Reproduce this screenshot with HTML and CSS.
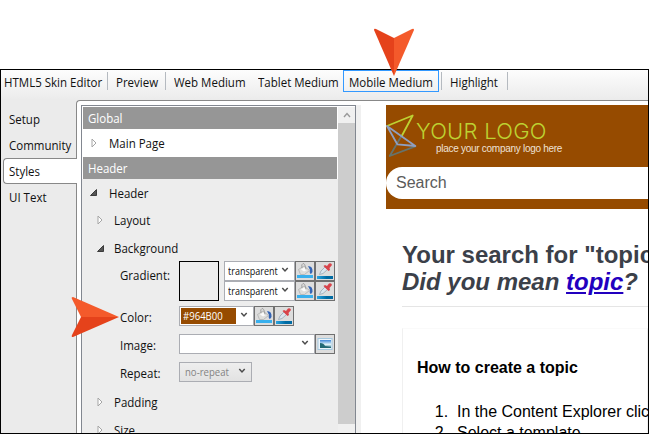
FILE: index.html
```html
<!DOCTYPE html>
<html lang="en">
<head>
<meta charset="utf-8">
<title>HTML5 Skin Editor</title>
<link rel="stylesheet" href="styles.css">
</head>
<body>
<svg class="defs" width="0" height="0">
  <defs>
    <linearGradient id="blue"><stop offset="0" stop-color="#2aa5e0"/><stop offset=".6" stop-color="#006ba3"/></linearGradient>
    <linearGradient id="sky" x2="0" y2="1"><stop offset="0" stop-color="#3d85d8"/><stop offset=".55" stop-color="#e4f6fa"/><stop offset="1" stop-color="#2c6e86"/></linearGradient>
    <symbol id="bucket" viewBox="0 0 18 18">
      <rect x="1" y="13" width="16" height="3" fill="#39b0ed"/>
      <path d="M12 4q5 0 4.500 6l-1.500 2q-2-1-1-4z" fill="#3565b5"/>
      <path d="M2.500 7.500 8 4l5.500 4.500-5 4-4 0z" fill="#dededb" stroke="#a9abaa" stroke-width=".7"/>
      <path d="M5 7.500 8 5.500l3 2.500-3 1.500z" fill="#fafafa"/>
      <path d="M6 6q-1-4 1-4.500t3 6" fill="none" stroke="#989a9a" stroke-width=".9"/>
    </symbol>
    <symbol id="dropper" viewBox="0 0 18 18">
      <rect x="1" y="14" width="16" height="3" fill="url(#blue)"/>
      <path d="M3.500 12.500 5 9l4-4 2.500 2.500-4.500 4z" fill="#dce5ee" stroke="#98a7b5" stroke-width=".8"/>
      <path d="m7.500 4 1.500-1 2 1 2-2.500q2.500-1 3 1.500L13.500 6l.5 2-1.500 1z" fill="#d9434a"/>
    </symbol>
    <symbol id="closed" viewBox="0 0 6 10"><path d="M1 1v8l4-4z" fill="#fff" stroke="#a5a5a5"/></symbol>
    <symbol id="open" viewBox="0 0 7 7"><path d="M6.500 .5v6H.500z" fill="#555" stroke="#222" stroke-width=".8"/></symbol>
    <symbol id="chev" viewBox="0 0 8 6"><path d="m1.300 1 2.700 3 2.700-3" fill="none" stroke="#4c4c4c" stroke-width="1.500"/></symbol>
  </defs>
</svg>
<main class="window">
  <nav class="toolbar">
    <div class="tool tool-title"><span class="t">HTML5 Skin Editor</span></div>
    <div class="tool tool-preview"><span class="t">Preview</span></div>
    <div class="tool tool-web"><span class="t">Web Medium</span></div>
    <div class="tool tool-tablet"><span class="t">Tablet Medium</span></div>
    <div class="tool tool-mobile"><span class="t">Mobile Medium</span></div>
    <div class="tool tool-highlight"><span class="t">Highlight</span></div>
  </nav>
  <div class="body">
    <aside class="tabs">
      <div class="tab"><span class="t">Setup</span></div>
      <div class="tab"><span class="t">Community</span></div>
      <div class="tab tab-active"><span class="t">Styles</span></div>
      <div class="tab"><span class="t">UI Text</span></div>
    </aside>
    <section class="page">
      <div class="panel">
        <div class="tree">
          <h2 class="group"><span class="t">Global</span></h2>
          <div class="row row-main"><svg class="closed"><use href="#closed"/></svg><span class="t">Main Page</span></div>
          <h2 class="group"><span class="t">Header</span></h2>
          <div class="props">
            <div class="row"><svg class="open"><use href="#open"/></svg><span class="t">Header</span></div>
            <div class="row sub"><svg class="closed"><use href="#closed"/></svg><span class="t">Layout</span></div>
            <div class="row sub"><svg class="open"><use href="#open"/></svg><span class="t">Background</span></div>
            <div class="field field-gradient">
              <label><span class="t">Gradient:</span></label>
              <div class="swatch"></div>
              <div class="stops">
                <div class="controls"><div class="select select-stop"><span class="t">transparent</span><svg class="chev"><use href="#chev"/></svg></div><div class="button"><svg><use href="#bucket"/></svg></div><div class="button"><svg><use href="#dropper"/></svg></div></div>
                <div class="controls"><div class="select select-stop"><span class="t">transparent</span><svg class="chev"><use href="#chev"/></svg></div><div class="button"><svg><use href="#bucket"/></svg></div><div class="button"><svg><use href="#dropper"/></svg></div></div>
              </div>
            </div>
            <div class="field">
              <label><span class="t">Color:</span></label>
              <div class="select select-color"><div class="hex"><span class="t">#964B00</span></div><svg class="chev"><use href="#chev"/></svg></div><div class="button"><svg><use href="#bucket"/></svg></div><div class="button"><svg><use href="#dropper"/></svg></div>
            </div>
            <div class="field">
              <label><span class="t">Image:</span></label>
              <div class="select select-image"><svg class="chev"><use href="#chev"/></svg></div>
              <div class="button"><svg viewBox="0 0 18 18"><rect x="2" y="3.500" width="14" height="11" fill="#edf5fb" stroke="#a4c8df"/><rect x="4" y="5" width="11" height="8" fill="url(#sky)"/><path d="M4 8q4 0 5 3l6 1v1H4z" fill="#236a75"/></svg></div>
            </div>
            <div class="field">
              <label><span class="t">Repeat:</span></label>
              <div class="select select-repeat"><span class="t">no-repeat</span><svg class="chev"><use href="#chev"/></svg></div>
            </div>
            <div class="row sub row-padding"><svg class="closed"><use href="#closed"/></svg><span class="t">Padding</span></div>
            <div class="row sub"><svg class="closed"><use href="#closed"/></svg><span class="t">Size</span></div>
          </div>
        </div>
        <div class="scrollbar"><div class="scroll-up"><svg width="8" height="6" viewBox="0 0 8 6"><path d="m1 5 3-3.500L7 5" fill="none" stroke="#999" stroke-width="1.400"/></svg></div><div class="thumb"></div></div>
      </div>
      <div class="gutter"></div>
      <article class="preview">
        <header class="site-header">
          <div class="brand">
            <svg class="mark" width="31" height="45" viewBox="0 0 31 45" fill="none" stroke-width="1.800" stroke-linecap="round" stroke-linejoin="round">
              <path d="M16 21 3.700 42 29.300 32.300" stroke="#66736c"/>
              <path d="M1 12 26.700 1.500 16 21.500" stroke="#bdd232"/>
              <path d="M1 12 29.300 32 11.300 30.300z" stroke="#8e9fc0"/>
            </svg>
            <div class="brand-text"><div class="brand-name">YOUR LOGO</div><div class="brand-line">place your company logo here</div></div>
          </div>
          <div class="search">Search</div>
        </header>
        <div class="results">
          <h1>Your search for "topic"<br><em>Did you mean <a>topic</a>?</em></h1>
          <div class="card">
            <h3>How to create a topic</h3>
            <ol><li>In the Content Explorer click</li><li>Select a template</li></ol>
          </div>
        </div>
      </article>
    </section>
  </div>
</main>
<svg class="pointer pointer-down" width="42" height="49" viewBox="0 0 42 49"><path d="M21 48 1 2Q1 0 3 1L21 10z" fill="#e5421b"/><path d="M21 48 41 2Q41 0 39 1L21 10z" fill="#f45a2b"/></svg>
<svg class="pointer pointer-right" width="49" height="42" viewBox="0 0 49 42"><path d="M48 21 2 1Q0 1 1 3l9 18z" fill="#f45a2b"/><path d="M48 21 2 41Q0 41 1 39l9-18z" fill="#e5421b"/></svg>
</body>
</html>
```
FILE: styles.css
```css
* { box-sizing: border-box; }
body { margin: 0; padding-top: 69px; width: 649px; height: 434px; overflow: hidden; background: #fff; color: #111; font: 13px/18px "Open Sans", "Noto Sans", sans-serif; }
svg { display: block; flex: none; }
.t { display: inline-block; transform: scaleX(.885); transform-origin: 0 50%; white-space: nowrap; }
.defs { position: absolute; }
.window { height: 365px; border: 1px solid #000; overflow: hidden; background: #ebebeb; }
.toolbar { display: flex; height: 30px; background: linear-gradient(#fdfdfd, #ebebeb); padding-top: 2px; white-space: nowrap; }
.tool { height: 18px; line-height: 20px; flex: none; }
.tool-title { width: 107px; padding-left: 3px; border-right: 1px solid #b5bac0; }
.tool-preview { width: 58px; padding-left: 8px; border-right: 1px solid #b5bac0; }
.tool-web { width: 84px; padding-left: 8px; }
.tool-tablet { width: 93px; padding-left: 8px; }
.tool-mobile { width: 96px; height: 22px; margin-top: -2px; padding: 1px 0 0 5px; border: 1px solid #3399ff; }
.tool-highlight { width: 67px; margin-left: 2px; padding-left: 8px; border: solid #b5bac0; border-width: 0 1px; }
.body { display: flex; height: 333px; }
.tabs { width: 75px; padding-top: 6px; flex: none; }
.tab { display: block; height: 26px; line-height: 26px; padding-left: 8px; white-space: nowrap; }
.tab-active { width: 74px; margin-left: 2px; padding-left: 5px; background: #fff; border: 1px solid #888; border-right: 0; border-radius: 4px 0 0 4px; line-height: 24px; position: relative; }
.page { display: flex; flex: none; width: 572px; border: 1px solid #888; border-width: 1px 0 0 1px; border-radius: 4px 0 0 0; background: #fff; padding: 4px 0 0 4px; height: 334px; }
.panel { display: flex; width: 275px; height: 340px; flex: none; border: 1px solid #828790; border-bottom: 0; padding: 1px 0 0 1px; background: #fff; }
.tree { width: 254px; flex: none; }
.group { margin: 0; height: 22px; padding-left: 5px; background: #969696; color: #fff; font-size: 13px; line-height: 22px; font-weight: 400; }
.row { display: flex; align-items: center; height: 28px; padding-left: 7px; }
.row .t { margin-left: 12px; }
.row-main { padding-left: 8px; }
.sub { padding-left: 14px; }
.closed { width: 6px; height: 10px; }
.open { width: 7px; height: 7px; }
.sub .closed + .t { margin-left: 11px; }
.sub .open + .t { margin-left: 10px; }
.props { background: #ededed; height: 260px; margin-right: -1px; margin-left: -1px; padding-left: 1px; }
.props > .row:first-child { height: 27px; }
.field { display: flex; height: 28px; padding-left: 37px; }
.field-gradient { height: 45px; margin-top: -1px; }
label { width: 59px; flex: none; height: 20px; line-height: 22px; }
.field-gradient label { height: 27px; line-height: 28px; }
.swatch { width: 40px; height: 40px; border: 1px solid #000; margin-right: 5px; }
.controls { display: flex; }
.select { display: flex; align-items: center; justify-content: space-between; height: 20px; border: 1px solid #abadb3; background: #fff; font-size: 11px; line-height: 18px; flex: none; padding: 0 5px 0 4px; white-space: nowrap; }
.select .t { transform: scaleX(.87); }
.select .select-stop .t, .select-stop .t { width: 50px; transform: scaleX(.82); }
.select-stop { width: 71px; padding-left: 3px; }
.select-color { width: 75px; padding-left: 1px; }
.select-image { width: 136px; justify-content: flex-end; }
.select-repeat { width: 73px; padding-left: 5px; background: linear-gradient(#eee, #e2e2e2); color: #838383; }
.hex { width: 55px; height: 16px; line-height: 16px; background: #964b00; color: #fff; padding-left: 2px; }
.chev { width: 8px; height: 6px; margin-bottom: 2px; }
.button { width: 20px; height: 20px; border: 1px solid #707070; background: #ddd; flex: none; }
.button svg { width: 18px; height: 18px; }
.row-padding { margin-top: -2px; }
.scrollbar { width: 17px; margin-left: 1px; background: #f0f0f0; height: 340px; }
.scroll-up { height: 16px; display: flex; align-items: center; justify-content: center; }
.thumb { height: 301px; background: #cdcdcd; }
.gutter { width: 5px; background: #f0f0f0; flex: none; }
.preview { width: 287px; padding-left: 25px; font-family: "Liberation Sans", Arial, sans-serif; color: #000; flex: none; overflow: hidden; }
.site-header { height: 104px; background: #964b00; }
.brand { display: flex; height: 62px; padding-top: 9px; }
.brand-name { height: 27px; font: 300 22px/34px Inter, sans-serif; letter-spacing: .25px; margin-left: -1px; color: #bdd232; white-space: nowrap; }
.brand-line { padding-left: 19px; font-size: 10px; letter-spacing: -.28px; line-height: 16px; color: #eee1d5; white-space: nowrap; }
.search { height: 32px; border-radius: 16px 0 0 16px; background: #fff; padding-left: 10px; font-size: 16px; line-height: 32px; color: #5b5b5b; }
.results { padding: 32px 0 0 16px; }
h1 { margin: 0; height: 66px; border-bottom: 1px solid #e5e5e5; font-size: 24px; line-height: 27px; color: #3b4049; white-space: nowrap; }
a { color: #2200bf; text-decoration: underline; }
.card { height: 130px; margin-top: 21px; border: 1px solid #f0f0f0; border-top-color: #fafafa; padding: 30px 0 0 14px; }
h3 { margin: 0; font-size: 16px; line-height: 18px; white-space: nowrap; }
ol { margin: 24px 0 0; padding-left: 40px; font-size: 16px; line-height: 21px; white-space: nowrap; }
li::marker { content: counter(list-item) ".\00a0\00a0"; }
.pointer { position: absolute; }
.pointer-down { left: 373px; top: 28px; }
.pointer-right { left: 71px; top: 296px; }
```
